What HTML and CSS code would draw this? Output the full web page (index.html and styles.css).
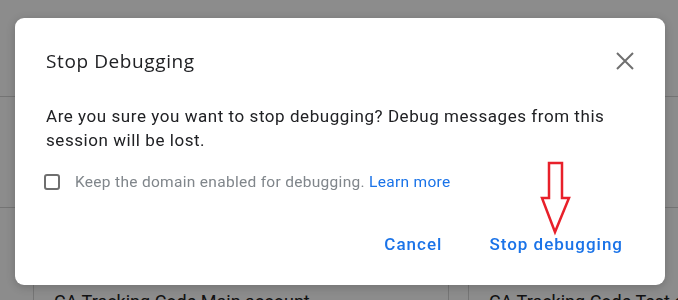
FILE: index.html
```html
<!DOCTYPE html>
<html lang="en">
<head>
  <meta charset="UTF-8">
  <meta name="viewport" content="width=device-width, initial-scale=1.0">
  <link rel="stylesheet" href="styles.css">
  <title>Stop Debugging</title>
</head>
<body>

  <!-- background page -->
  <div class="page">
    <div class="band band-top"></div>
    <div class="band band-mid"></div>
    <div class="band band-low"></div>
    <div class="cards">
      <div class="card">CA Tracking Code Main account</div>
      <div class="card">CA Tracking Code Test account</div>
    </div>
  </div>

  <div class="scrim"></div>

  <!-- dialog -->
  <div class="dialog">
    <div class="dialog-head">
      <h1>Stop Debugging</h1>
      <button class="close" aria-label="Close">
        <svg width="18" height="18" viewBox="0 0 18 18">
          <path d="M1 1 L17 17 M17 1 L1 17" stroke="#6f6f6f" stroke-width="2" fill="none"/>
        </svg>
      </button>
    </div>

    <p class="message">Are you sure you want to stop debugging? Debug messages from this session will be lost.</p>

    <label class="keep">
      <span class="box"></span>
      <span>Keep the domain enabled for debugging. <a href="#">Learn more</a></span>
    </label>

    <div class="actions">
      <button class="text-button">Cancel</button>
      <button class="text-button">Stop debugging</button>
    </div>

    <!-- annotation arrow -->
    <svg class="arrow" width="32" height="76" viewBox="0 0 32 76">
      <polygon points="9,2 22,2 22,37 29,37 15,71 2,37 9,37" fill="none" stroke="#e8202a" stroke-width="2.5"/>
    </svg>
  </div>

</body>
</html>
```

FILE: styles.css
```css
body {
  margin: 0;
  font-family: 'Roboto', 'Liberation Sans', sans-serif;
  background-color: #fff;
  width: 678px;
  height: 300px;
  overflow: hidden;
}

.page {
  height: 300px;
  display: flex;
  flex-direction: column;
}

.band {
  flex-shrink: 0;
  border-bottom: 1px solid #d4d4d4;
}

.band-top {
  height: 96px;
}

.band-mid {
  height: 110px;
}

.band-low {
  height: 74px;
  border-bottom: none;
}

.cards {
  display: flex;
  gap: 19px;
  padding: 0 0 0 33px;
}

.card {
  flex-shrink: 0;
  width: 394px;
  height: 40px;
  border-left: 1px solid #d6d6d6;
  border-right: 1px solid #d6d6d6;
  padding: 9px 0 0 20px;
  font-size: 18px;
  color: #222;
  white-space: nowrap;
  overflow: hidden;
}

.scrim {
  position: fixed;
  top: 0;
  left: 0;
  width: 100%;
  height: 100%;
  background: rgba(0, 0, 0, 0.45);
}

.dialog {
  position: absolute;
  top: 18px;
  left: 15px;
  width: 650px;
  height: 267px;
  box-sizing: border-box;
  background-color: #fff;
  border-radius: 9px;
  padding: 29px 42px 0 31px;
  box-shadow: 0 2px 10px rgba(0, 0, 0, 0.2);
}

.dialog-head {
  display: flex;
  justify-content: space-between;
  align-items: center;
}

h1 {
  margin: 0;
  font-family: 'Open Sans', 'Roboto', sans-serif;
  font-size: 19px;
  font-weight: 400;
  letter-spacing: 0.6px;
  line-height: 28px;
  color: #202124;
}

.close {
  background: none;
  border: none;
  padding: 0;
  margin-right: -11px;
  width: 18px;
  height: 18px;
  cursor: pointer;
}

.message {
  margin: 29px 0 0;
  font-size: 17px;
  letter-spacing: 0.55px;
  line-height: 24px;
  color: #202124;
}

.keep {
  display: flex;
  align-items: center;
  margin-top: 21px;
  margin-left: -2px;
  font-size: 15.5px;
  letter-spacing: 0.3px;
  color: #80868b;
}

.box {
  width: 12px;
  height: 12px;
  border: 2px solid #6f6f6f;
  border-radius: 3px;
  margin-right: 15px;
}

.keep a {
  color: #1a73e8;
  text-decoration: none;
}

.actions {
  display: flex;
  justify-content: flex-end;
  gap: 47px;
  margin-top: 43px;
}

.text-button {
  background: none;
  border: none;
  padding: 0;
  font-family: 'Roboto', sans-serif;
  font-size: 17px;
  font-weight: 500;
  letter-spacing: 1px;
  color: #1a73e8;
  cursor: pointer;
}

.arrow {
  position: absolute;
  left: 525px;
  top: 143px;
}
```
